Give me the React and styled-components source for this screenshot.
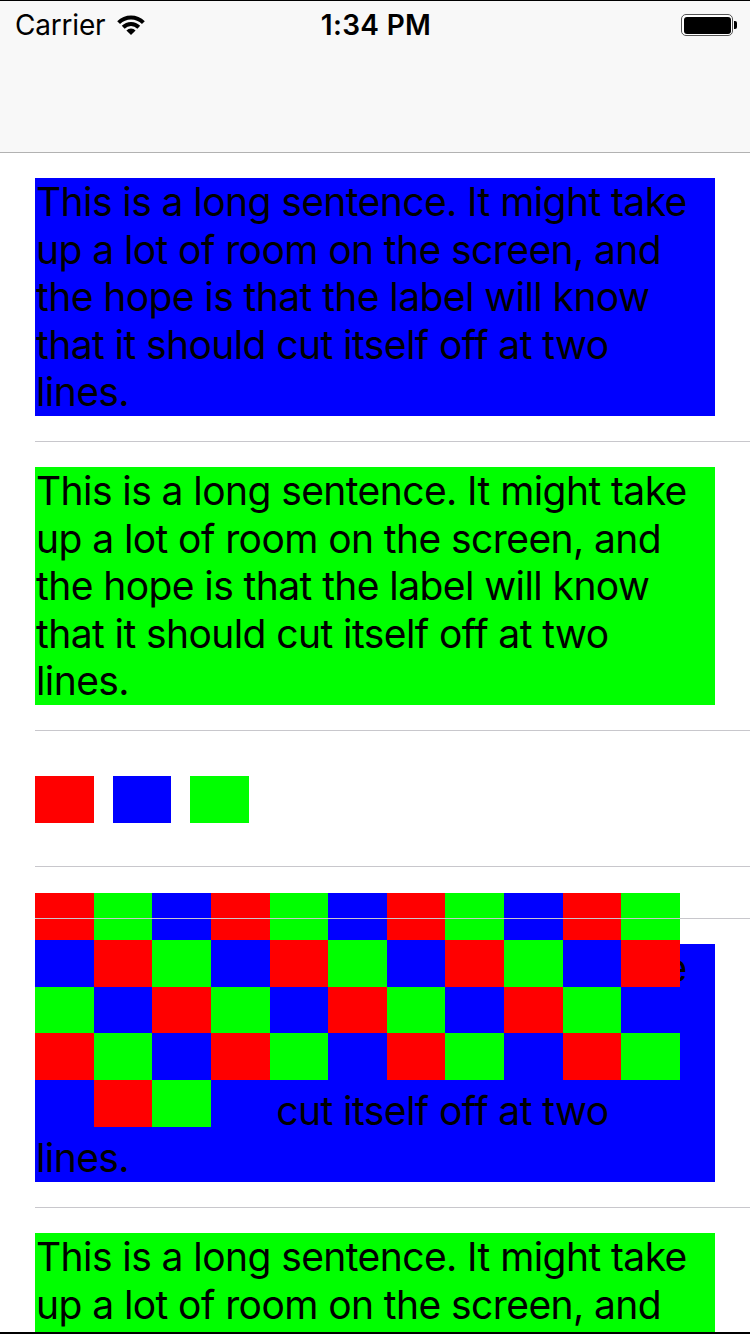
import React from 'react';
import styled, { createGlobalStyle } from 'styled-components';

const GlobalStyle = createGlobalStyle`
  html, body {
    margin: 0;
    padding: 0;
    background: #fff;
  }
  body {
    font-family: Inter, "Liberation Sans", Arial, sans-serif;
  }
`;

const SENTENCE = [
  'This is a long sentence. It might take',
  'up a lot of room on the screen, and',
  'the hope is that the label will know',
  'that it should cut itself off at two',
  'lines.',
];

const SWATCH_COLORS = ['#ff0000', '#00ff00', '#0000ff'];
const ROW_COLORS = ['#ff0000', '#0000ff', '#00ff00'];

const Screen = styled.div`
  width: 750px;
  height: 1334px;
  box-sizing: border-box;
  border-top: 1px solid #000;
  border-bottom: 2px solid #000;
  overflow: hidden;
  background: #fff;
`;

const Header = styled.header`
  height: 151px;
  background: #f8f8f8;
  border-bottom: 1px solid #b2b2b2;
`;

const StatusBar = styled.div`
  height: 48px;
  display: grid;
  grid-template-columns: 1fr auto 1fr;
  align-items: center;
  padding: 0 13px 0 15px;
  color: #000;
  font-size: 28px;
`;

const Carrier = styled.div`
  display: flex;
  align-items: center;
  gap: 12px;
  letter-spacing: -0.2px;
`;

const Clock = styled.div`
  font-weight: 600;
  letter-spacing: 0.3px;
`;

const BatteryWrap = styled.div`
  justify-self: end;
  display: flex;
  align-items: center;
  gap: 1px;
`;

const BatteryBody = styled.div`
  width: 52px;
  height: 22px;
  box-sizing: border-box;
  border: 1.5px solid #555;
  border-radius: 5px;
  padding: 1.5px;
  background: #fff;
`;

const BatteryFill = styled.div`
  width: 100%;
  height: 100%;
  background: #000;
  border-radius: 3px;
`;

const BatteryNub = styled.div`
  width: 3px;
  height: 8px;
  background: #000;
  border-radius: 0 2px 2px 0;
`;

const Table = styled.div`
  display: flex;
  flex-direction: column;
`;

const Cell = styled.div`
  position: relative;
  box-sizing: border-box;
  padding: ${(p) => p.$pad || '25px 35px 26px'};
  height: ${(p) => (p.$height ? `${p.$height}px` : 'auto')};
  flex-shrink: 0;

  &::after {
    content: '';
    position: absolute;
    left: 35px;
    right: 0;
    bottom: 0;
    height: 1px;
    background: #c8c7cc;
    z-index: 2;
  }
`;

const Label = styled.div`
  width: 680px;
  background: ${(p) => p.$bg};
  color: #000;
  font-size: 39px;
  line-height: 47.6px;
  padding-left: 1px;
  box-sizing: border-box;
  white-space: nowrap;
  letter-spacing: -0.58px;
`;

const SwatchRow = styled.div`
  display: flex;
  gap: 18.9px;
`;

const Swatch = styled.div`
  width: 58.64px;
  height: 47px;
  background: ${(p) => p.$color};
`;

const Checker = styled.div`
  position: relative;
  z-index: 1;
  display: grid;
  grid-template-columns: repeat(11, 58.64px);
  grid-auto-rows: 46.8px;
  width: 645px;
`;

const CheckerSquare = styled.div`
  background: ${(p) => p.$color};
`;

const WifiIcon = () => (
  <svg width="28" height="20" viewBox="0 0 28 20">
    <path d="M0.21 6.21 A19.5 19.5 0 0 1 27.79 6.21 L24.96 9.04 A15.5 15.5 0 0 0 3.04 9.04 Z" fill="#000" />
    <path d="M4.81 10.81 A13 13 0 0 1 23.19 10.81 L20.36 13.64 A9 9 0 0 0 7.64 13.64 Z" fill="#000" />
    <path d="M14 20 L9.4 15.4 A6.5 6.5 0 0 1 18.6 15.4 Z" fill="#000" />
  </svg>
);

const SentenceLabel = ({ bg }) => (
  <Label $bg={bg}>
    {SENTENCE.map((line, i) => (
      <div key={i}>{line}</div>
    ))}
  </Label>
);

export default function App() {
  return (
    <>
      <GlobalStyle />
      <Screen>
        <Header>
          <StatusBar>
            <Carrier>
              Carrier
              <WifiIcon />
            </Carrier>
            <Clock>1:34 PM</Clock>
            <BatteryWrap>
              <BatteryBody>
                <BatteryFill />
              </BatteryBody>
              <BatteryNub />
            </BatteryWrap>
          </StatusBar>
        </Header>

        <Table>
          <Cell>
            <SentenceLabel bg="#0000ff" />
          </Cell>
          <Cell>
            <SentenceLabel bg="#00ff00" />
          </Cell>
          <Cell $pad="45px 35px 44px">
            <SwatchRow>
              {ROW_COLORS.map((c) => (
                <Swatch key={c} $color={c} />
              ))}
            </SwatchRow>
          </Cell>
          <Cell $pad="26px 35px 0" $height={52}>
            <Checker>
              {Array.from({ length: 48 }, (_, i) => (
                <CheckerSquare key={i} $color={SWATCH_COLORS[i % 3]} />
              ))}
            </Checker>
          </Cell>
          <Cell>
            <SentenceLabel bg="#0000ff" />
          </Cell>
          <Cell>
            <SentenceLabel bg="#00ff00" />
          </Cell>
        </Table>
      </Screen>
    </>
  );
}
